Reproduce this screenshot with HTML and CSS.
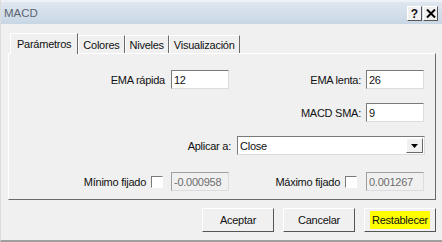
FILE: index.html
```html
<!DOCTYPE html>
<html lang="es">
<head>
  <meta charset="UTF-8" />
  <title>MACD</title>
  <link rel="stylesheet" href="styles.css">
</head>
<body>
  <div class="window">
    <div class="titlebar">
      <span class="title">MACD</span>
      <div class="title-btns">
        <span class="tbtn">?</span>
        <span class="tbtn tbtn-x">
          <svg width="10" height="9" viewBox="0 0 10 9"><path d="M1 0.5 L9 8.5 M9 0.5 L1 8.5" stroke="#000" stroke-width="2"/></svg>
        </span>
      </div>
    </div>

    <div class="content">
      <div class="tabs">
        <span class="tab active">Parámetros</span>
        <span class="tab">Colores</span>
        <span class="tab">Niveles</span>
        <span class="tab">Visualización</span>
      </div>

      <div class="panel">
        <div class="row">
          <label class="lbl c1">EMA rápida</label>
          <input class="field" type="text" value="12" />
          <label class="lbl c3">EMA lenta:</label>
          <input class="field" type="text" value="26" />
        </div>
        <div class="row">
          <span class="c1"></span>
          <span></span>
          <label class="lbl c3">MACD SMA:</label>
          <input class="field" type="text" value="9" />
        </div>
        <div class="row-apply">
          <label class="lbl apply-lbl">Aplicar a:</label>
          <div class="select">
            <span class="select-text">Close</span>
            <span class="select-btn">
              <svg width="7" height="4" viewBox="0 0 7 4"><path d="M0 0 H7 L3.5 4 Z" fill="#000"/></svg>
            </span>
          </div>
        </div>
        <div class="row">
          <div class="c1 check-cell">
            <span class="lbl">Mínimo fijado</span>
            <span class="check"></span>
          </div>
          <input class="field disabled" type="text" value="-0.000958" disabled />
          <div class="c3 check-cell">
            <span class="lbl">Máximo fijado</span>
            <span class="check"></span>
          </div>
          <input class="field disabled" type="text" value="0.001267" disabled />
        </div>
      </div>

      <div class="buttons">
        <button class="btn">Aceptar</button>
        <button class="btn">Cancelar</button>
        <button class="btn"><span class="hl">Restablecer</span></button>
      </div>
    </div>
  </div>
</body>
</html>
```

FILE: styles.css
```css
body {
  margin: 0;
  font-family: "Liberation Sans", Arial, sans-serif;
  font-size: 11px;
  letter-spacing: -0.25px;
  background: #f0f0f0;
  color: #111;
}

.window {
  width: 442px;
  height: 242px;
  box-sizing: border-box;
  border-left: 1px solid #dcdcdc;
  border-bottom: 2px solid #a0a0a0;
  background: #f0f0f0;
  overflow: hidden;
}

.titlebar {
  height: 24px;
  display: flex;
  align-items: center;
  justify-content: space-between;
  padding: 0 4px 0 3px;
  background: linear-gradient(#dfe7f0, #c8d6e5);
  border-top: 2px solid #eef2f7;
  box-sizing: border-box;
}

.title {
  color: #5d6672;
  font-size: 11.5px;
  letter-spacing: 0;
}

.title-btns {
  display: flex;
  gap: 1px;
  margin-top: 1px;
}

.tbtn {
  width: 15px;
  height: 15px;
  box-sizing: border-box;
  border: 1px solid;
  border-color: #fff #555 #555 #fff;
  background: #f0f0f0;
  display: flex;
  align-items: center;
  justify-content: center;
  font-weight: bold;
  font-size: 12px;
  letter-spacing: 0;
}

.content {
  padding: 8px 6px 0 7px;
}

.tabs {
  display: flex;
  align-items: flex-end;
  height: 21px;
  padding-left: 2px;
}

.tab {
  height: 18px;
  line-height: 18px;
  padding: 0 4px;
  border-left: 1px solid #fff;
  border-right: 1px solid #6a6a6a;
  border-top: 1px solid #fff;
  box-sizing: border-box;
}

.tab.active {
  height: 21px;
  line-height: 20px;
  padding: 0 6px;
  border-right: 1px solid #6a6a6a;
  position: relative;
  top: 1px;
  background: #f0f0f0;
}

.panel {
  height: 147px;
  box-sizing: border-box;
  border: 1px solid;
  border-color: #fff #6a6a6a #6a6a6a #fff;
  padding-top: 16px;
}

.row {
  display: grid;
  grid-template-columns: 162px 58px 137px 58px;
  align-items: center;
  height: 19px;
  margin-bottom: 14px;
}

.lbl {
  text-align: right;
  white-space: nowrap;
}

.c1 {
  padding-right: 6px;
}

.c3 {
  padding-right: 5px;
}

.field {
  width: 58px;
  height: 19px;
  box-sizing: border-box;
  border: 1px solid;
  border-color: #7a7a7a #dcdcdc #dcdcdc #7a7a7a;
  background: #fff;
  font: inherit;
  letter-spacing: inherit;
  padding: 0 2px;
  color: #111;
}

.field.disabled {
  background: #f0f0f0;
  color: #6d6d6d;
  border-color: #a0a0a0 #dcdcdc #dcdcdc #a0a0a0;
}

.row-apply {
  display: flex;
  align-items: center;
  height: 19px;
  margin-bottom: 17px;
}

.apply-lbl {
  width: 228px;
  padding-right: 6px;
  box-sizing: border-box;
}

.select {
  width: 188px;
  height: 19px;
  box-sizing: border-box;
  border: 1px solid;
  border-color: #7a7a7a #dcdcdc #dcdcdc #7a7a7a;
  background: #fff;
  display: flex;
  align-items: center;
  justify-content: space-between;
  padding: 0 1px 0 2px;
}

.select-btn {
  width: 17px;
  height: 15px;
  box-sizing: border-box;
  border: 1px solid;
  border-color: #fff #6a6a6a #6a6a6a #fff;
  background: #f0f0f0;
  display: flex;
  align-items: center;
  justify-content: center;
}

.check-cell {
  display: flex;
  justify-content: flex-end;
  align-items: center;
  gap: 5px;
}

.c1.check-cell {
  padding-right: 8px;
}

.c3.check-cell {
  padding-right: 9px;
}

.check {
  width: 12px;
  height: 12px;
  box-sizing: border-box;
  border: 1px solid;
  border-color: #7a7a7a #fff #fff #7a7a7a;
  background: #fff;
}

.buttons {
  display: flex;
  justify-content: flex-end;
  gap: 9px;
  padding: 8px 0 0;
}

.btn {
  width: 72px;
  height: 24px;
  box-sizing: border-box;
  border: 1px solid;
  border-color: #fff #555 #555 #fff;
  background: #f0f0f0;
  font: inherit;
  letter-spacing: inherit;
  color: #111;
  padding: 0;
}

.hl {
  background: #ffff00;
  padding: 3px 2px;
}
```
